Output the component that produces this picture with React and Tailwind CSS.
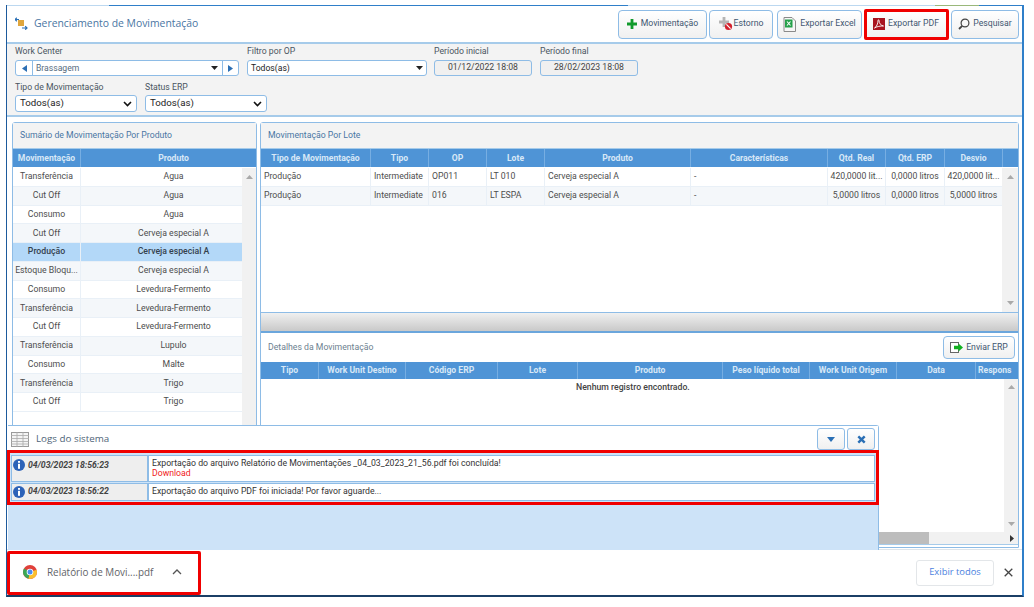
import React from "react";

const Tri = ({ className = "" }) => (
  <svg width="7" height="4" viewBox="0 0 7 4" className={className}><path d="M0 0h7L3.5 4z" fill="#222" /></svg>
);

const Chev = () => (
  <svg width="9" height="6" viewBox="0 0 9 6" fill="none"><path d="M1 1l3.5 3.5L8 1" stroke="#111" strokeWidth="1.6" /></svg>
);

const Btn = ({ w, icon, label, gap = "gap-1" }) => (
  <div className={`h-[29px] ${w} ${gap} flex items-center justify-center rounded-[4px] border border-[#8ebce6] bg-linear-to-b from-white to-[#f0f0f0] text-[8.7px] text-[#3f5670]`}>
    {icon}
    <span>{label}</span>
  </div>
);

const PlusIcon = () => (
  <svg width="10" height="10" viewBox="0 0 10 10"><path d="M3.6 0h2.8v3.6H10v2.8H6.4V10H3.6V6.4H0V3.6h3.6z" fill="#119a2c" /></svg>
);
const EstornoIcon = () => (
  <svg width="14" height="14" viewBox="0 0 14 14">
    <path d="M3.6 0h2.8v3.6H10v2.8H6.4V10H3.6V6.4H0V3.6h3.6z" fill="#b5b5b5" />
    <circle cx="9.5" cy="9.5" r="3.6" fill="#d3202c" />
    <path d="M7.4 7.4l4.2 4.2" stroke="#fff" strokeWidth="1.2" />
  </svg>
);
const ExcelIcon = () => (
  <svg width="13" height="15" viewBox="0 0 13 15">
    <path d="M1 .5h8l3.5 3.5v10.5H1z" fill="#f6f6f6" stroke="#8a8a8a" />
    <rect x="2" y="2.5" width="7.5" height="8" fill="#25a04a" />
    <path d="M4 4.5l3.5 4M7.5 4.5L4 8.5" stroke="#fff" strokeWidth="1.1" />
  </svg>
);
const PdfIcon = () => (
  <svg width="12" height="12" viewBox="0 0 12 12">
    <rect width="12" height="12" fill="#a81420" />
    <path d="M1.5 10c2-1 3.5-4.5 3.5-7.5 0-1 1-1 1 0 0 3 2 5 4.5 5.5-3-.2-6.5.5-9 2z" fill="none" stroke="#fff" strokeWidth=".9" />
  </svg>
);
const SearchIcon = () => (
  <svg width="12" height="12" viewBox="0 0 12 12" fill="none">
    <circle cx="7" cy="5" r="3.9" stroke="#444" strokeWidth="1.2" />
    <path d="M4.2 7.8L1 11" stroke="#444" strokeWidth="1.8" />
  </svg>
);
const LogoIcon = () => (
  <svg width="13" height="13" viewBox="0 0 13 13">
    <rect x="3" y="3" width="6" height="6" fill="#e0a63c" />
    <path d="M0 2.5h4M1.8 .8L0 2.5l1.8 1.7" stroke="#2a6fb5" strokeWidth="1.2" fill="none" />
    <path d="M7 11h5M10.2 9.2L12 11l-1.8 1.7" stroke="#2a6fb5" strokeWidth="1.2" fill="none" />
  </svg>
);
const ErpIcon = () => (
  <svg width="13" height="11" viewBox="0 0 13 11">
    <rect x=".5" y=".5" width="8" height="10" fill="#fff" stroke="#666" />
    <path d="M4 3.8h4.5V1.5L13 5.5 8.5 9.500V7.2H4z" fill="#11b01f" />
  </svg>
);
const InfoIcon = () => (
  <svg width="12" height="12" viewBox="0 0 12 12" className="shrink-0">
    <circle cx="6" cy="6" r="6" fill="#2c62b8" />
    <rect x="5" y="2" width="2" height="1.8" fill="#fff" />
    <rect x="5" y="4.8" width="2" height="5" fill="#fff" />
  </svg>
);
const GridIcon = () => (
  <svg width="18" height="15" viewBox="0 0 18 15">
    <rect x=".5" y=".5" width="17" height="14" fill="#f4f4f4" stroke="#9a9a9a" />
    <path d="M0 3.5h18M0 6.5h18M0 9.5h18M0 12h18M6 0v15M12 0v15" stroke="#a9a9a9" strokeWidth=".8" />
  </svg>
);
const ChromeIcon = () => (
  <svg width="14" height="14" viewBox="0 0 14 14">
    <circle cx="7" cy="7" r="7" fill="#e0403a" />
    <path d="M7 7L1 3.5A7 7 0 0 0 5.5 13.8z" fill="#3aa757" />
    <path d="M7 7l6.6-2.2A7 7 0 0 1 5.5 13.8z" fill="#fbc02d" />
    <circle cx="7" cy="7" r="3.3" fill="#fff" />
    <circle cx="7" cy="7" r="2.5" fill="#4a8df0" />
  </svg>
);

const Label = ({ children }) => <div className="text-[8.7px] leading-[12px] text-[#4a5561]">{children}</div>;

const DateBox = ({ w, children }) => (
  <div className={`${w} h-[16px] flex items-center justify-center rounded-[3px] border border-[#8ebce6] bg-[#f0f0f0] text-[8.7px] text-[#444]`}>{children}</div>
);

const HeadCell = ({ w, children, clip }) => (
  <div className={`${w} h-full shrink-0 flex items-center ${clip ? "justify-start pl-[2px]" : "justify-center"} overflow-hidden whitespace-nowrap border-r border-[#77aee2] text-[8.6px] font-bold text-[#d8e8f7]`}>{children}</div>
);

const summary = [
  ["Transferência", "Agua"],
  ["Cut Off", "Agua"],
  ["Consumo", "Agua"],
  ["Cut Off", "Cerveja especial A"],
  ["Produção", "Cerveja especial A"],
  ["Estoque Bloqu...", "Cerveja especial A"],
  ["Consumo", "Levedura-Fermento"],
  ["Transferência", "Levedura-Fermento"],
  ["Cut Off", "Levedura-Fermento"],
  ["Transferência", "Lupulo"],
  ["Consumo", "Malte"],
  ["Transferência", "Trigo"],
  ["Cut Off", "Trigo"],
];

const lots = [
  ["Produção", "Intermediate", "OP011", "LT 010", "Cerveja especial A", "-", "420,0000 lit...", "0,0000 litros", "420,0000 lit..."],
  ["Produção", "Intermediate", "016", "LT ESPA", "Cerveja especial A", "-", "5,0000 litros", "0,0000 litros", "5,0000 litros"],
];

const lotCols = ["w-[110px]", "w-[58px]", "w-[58px]", "w-[58px]", "w-[146px]", "w-[137px]", "w-[58px]", "w-[59px]", "w-[58px]"];

const ScrollArrow = ({ down }) => (
  <svg width="7" height="4" viewBox="0 0 7 4"><path d={down ? "M0 0h7L3.5 4z" : "M0 4h7L3.5 0z"} fill="#a9a9a9" /></svg>
);

export default function App() {
  return (
    <div className="relative w-[1034px] h-[607px] overflow-hidden bg-white" style={{ fontFamily: '"Roboto", "Liberation Sans", sans-serif' }}>
      <div className="ml-[6px] mt-[5px] w-[1018px] h-[592px] flex flex-col border-l border-r-2 border-b-2 border-l-[#1d5a9c] border-r-[#2f7fc9] border-b-[#1b3f66]">
        <div className="h-[1px] flex shrink-0 bg-[#2f7fc9]">
          <div className="w-[102px] bg-[#bcd8f0]" />
          <div className="w-[519px]" />
          <div className="w-[307px] bg-[#bcd8f0]" />
          <div className="w-[44px] bg-[#9ab87a]" />
        </div>
        {/* title bar */}
        <div className="h-[38px] shrink-0 flex items-center justify-between bg-white pl-[8px] pr-[3px] border-b-2 border-[#a6cbea]">
          <div className="flex items-center gap-[6px]">
            <LogoIcon />
            <span className="text-[10.4px] text-[#4a76a3]" style={{ fontFamily: '"Open Sans", sans-serif' }}>Gerenciamento de Movimentação</span>
          </div>
          <div className="flex items-center">
            <Btn w="w-[89px]" icon={<PlusIcon />} label="Movimentação" gap="gap-[4px]" />
            <div className="ml-[2px]"><Btn w="w-[64px]" icon={<EstornoIcon />} label="Estorno" gap="gap-[1px]" /></div>
            <div className="ml-[4px]"><Btn w="w-[85px]" icon={<ExcelIcon />} label="Exportar Excel" gap="gap-[4px]" /></div>
            <div className="ml-[2px]"><Btn w="w-[84px]" icon={<PdfIcon />} label="Exportar PDF" gap="gap-[3px]" /></div>
            <div className="ml-[3px]"><Btn w="w-[68px]" icon={<SearchIcon />} label="Pesquisar" gap="gap-[3px]" /></div>
          </div>
        </div>
        {/* filters */}
        <div className="h-[73px] shrink-0 bg-[#f3f3f3] border-b-2 border-[#a6cbea] pl-[8px]">
          <div className="flex">
            <div className="w-[232px]">
              <div className="h-[13px] flex items-center"><Label>Work Center</Label></div>
              <div className="mt-[3px] w-[224px] h-[16px] flex items-center rounded-[3px] border border-[#8ebce6] bg-white">
                <div className="w-[17px] h-full flex items-center justify-center border-r border-[#8ebce6]">
                  <svg width="5" height="7" viewBox="0 0 5 7"><path d="M5 0v7L0 3.5z" fill="#2c6fb4" /></svg>
                </div>
                <span className="ml-[3px] flex-1 text-[8.6px] text-[#566b80]">Brassagem</span>
                <Tri className="mr-[4px]" />
                <div className="w-[16px] h-full flex items-center justify-center border-l border-[#8ebce6]">
                  <svg width="5" height="7" viewBox="0 0 5 7"><path d="M0 0v7L5 3.5z" fill="#2c6fb4" /></svg>
                </div>
              </div>
            </div>
            <div className="w-[187px]">
              <div className="h-[13px] flex items-center"><Label>Filtro por OP</Label></div>
              <div className="mt-[3px] w-[180px] h-[16px] flex items-center justify-between px-[3px] rounded-[3px] border border-[#8ebce6] bg-white text-[8.6px] text-[#222]">
                <span>Todos(as)</span>
                <Tri />
              </div>
            </div>
            <div className="w-[106px]">
              <div className="h-[13px] flex items-center"><Label>Período inicial</Label></div>
              <div className="mt-[3px]"><DateBox w="w-[98px]">01/12/2022 18:08</DateBox></div>
            </div>
            <div>
              <div className="h-[13px] flex items-center"><Label>Período final</Label></div>
              <div className="mt-[3px]"><DateBox w="w-[98px]">28/02/2023 18:08</DateBox></div>
            </div>
          </div>
          <div className="flex mt-[4px]">
            {[["Tipo de Movimentação", "w-[130px]"], ["Status ERP", "w-[123px]"]].map(([l, w]) => (
              <div key={l} className={w}>
                <div className="h-[13px] flex items-center"><Label>{l}</Label></div>
                <div className="mt-[2px] w-[122px] h-[17px] flex items-center justify-between px-[4px] rounded-[3px] border border-[#8ebce6] bg-white text-[9.7px] text-[#222]">
                  <span>Todos(as)</span>
                  <Chev />
                </div>
              </div>
            ))}
          </div>
        </div>
        {/* panels */}
        <div className="flex-1 min-h-0 flex pl-[5px] pt-[5px] gap-[3px] text-[8.7px] text-[#4d4d4d]">
          <div className="w-[245px] h-[426px] shrink-0 rounded-t-[3px] border border-[#8ebce6] flex flex-col">
            <div className="h-[26px] shrink-0 flex items-center pl-[7px] bg-[#f3f3f3] text-[#4a76a3] border-b border-[#a6cbea]">Sumário de Movimentação Por Produto</div>
            <div className="h-[18px] shrink-0 flex bg-[#4f94d6]">
              <HeadCell w="w-[68px]">Movimentação</HeadCell>
              <div className="flex-1 pl-[10px] flex items-center justify-center text-[8.6px] font-bold text-[#d8e8f7]">Produto</div>
            </div>
            <div className="flex-1 flex min-h-0 pt-[1px]">
              <div className="w-[229px]">
                {summary.map(([a, b], i) => (
                  <div key={i} className={`h-[18.75px] flex items-center whitespace-nowrap border-b border-[#e9f0f7] ${i === 4 ? "bg-[#b3d8f8] text-[#33414e] font-medium" : i % 2 ? "bg-[#f4f7fa]" : "bg-white"}`}>
                    <div className="w-[68px] text-center border-r border-[#e9f0f7] h-full flex items-center justify-center">{a}</div>
                    <div className="flex-1 pl-[24px] text-center">{b}</div>
                  </div>
                ))}
              </div>
              <div className="flex-1 bg-[#f1f1f1] flex justify-center pt-[7px]"><ScrollArrow /></div>
            </div>
          </div>

          <div className="w-[759px] h-[426px] shrink-0 rounded-t-[3px] border border-[#8ebce6] flex flex-col">
            <div className="h-[26px] shrink-0 flex items-center pl-[7px] bg-[#f3f3f3] text-[#4a76a3] border-b border-[#a6cbea]">Movimentação Por Lote</div>
            <div className="h-[18px] shrink-0 flex bg-[#4f94d6]">
              {["Tipo de Movimentação", "Tipo", "OP", "Lote", "Produto", "Características", "Qtd. Real", "Qtd. ERP", "Desvio"].map((h, i) => (
                <HeadCell key={h} w={lotCols[i]}>{h}</HeadCell>
              ))}
            </div>
            <div className="h-[145px] shrink-0 flex pt-[1px]">
              <div className="w-[741px] shrink-0">
                {lots.map((r, i) => (
                  <div key={i} className={`h-[18.75px] flex items-center whitespace-nowrap border-b border-[#e9f0f7] ${i % 2 ? "bg-[#f4f7fa]" : "bg-white"}`}>
                    {r.map((c, j) => (
                      <div key={j} className={`${lotCols[j]} shrink-0 h-full flex items-center overflow-hidden border-r border-[#e9f0f7] ${j >= 6 ? "justify-center" : "pl-[3px]"}`}>{c}</div>
                    ))}
                  </div>
                ))}
              </div>
              <div className="flex-1 bg-[#f1f1f1] flex flex-col items-center justify-between py-[7px]"><ScrollArrow /><ScrollArrow down /></div>
            </div>
            <div className="h-[21px] shrink-0 bg-linear-to-b from-[#f0f0f0] to-[#c9c9c9] border-t border-[#8ebce6] border-b-2 border-b-[#6ba6dc]" />
            <div className="h-[29px] shrink-0 flex items-center justify-between pl-[7px] pr-[3px] bg-white">
              <span className="text-[#6d7f90]">Detalhes da Movimentação</span>
              <div className="w-[72px] h-[23px] flex items-center justify-center gap-[3px] rounded-[4px] border border-[#8ebce6] bg-linear-to-b from-white to-[#f0f0f0] text-[#3f5670]"><ErpIcon /><span>Enviar ERP</span></div>
            </div>
            <div className="h-[17px] shrink-0 flex bg-[#4f94d6] overflow-hidden">
              <HeadCell w="w-[58px]">Tipo</HeadCell>
              <HeadCell w="w-[87px]">Work Unit Destino</HeadCell>
              <HeadCell w="w-[92px]">Código ERP</HeadCell>
              <HeadCell w="w-[80px]">Lote</HeadCell>
              <HeadCell w="w-[145px]">Produto</HeadCell>
              <HeadCell w="w-[87px]">Peso líquido total</HeadCell>
              <HeadCell w="w-[87px]">Work Unit Origem</HeadCell>
              <HeadCell w="w-[79px]">Data</HeadCell>
              <HeadCell w="w-[43px]" clip>Respons</HeadCell>
            </div>
            <div className="relative flex-1 min-h-0 flex flex-col">
              <div className="flex-1 flex min-h-0">
                <div className="flex-1 pt-[2px] pl-[315px] font-medium text-[#444]">Nenhum registro encontrado.</div>
                <div className="w-[14px] bg-[#f1f1f1] flex flex-col items-center justify-between py-[6px]"><ScrollArrow /><ScrollArrow down /></div>
              </div>
              <div className="h-[12px] shrink-0 flex items-center bg-[#f1f1f1]">
                <div className="w-[668px] h-full bg-[#bdbdbd]" />
                <div className="flex-1 flex justify-end pr-[4px]">
                  <svg width="4" height="7" viewBox="0 0 4 7"><path d="M0 0v7L4 3.5z" fill="#333" /></svg>
                </div>
              </div>
              <div className="h-[3px] shrink-0 bg-white border-t border-[#a6cbea]" />
            </div>
          </div>
        </div>
        {/* download bar */}
        <div className="h-[46px] shrink-0 relative z-10 flex items-center justify-between bg-white border-t border-[#dfe5ea] pl-[16px] pr-[9px]" style={{ fontFamily: '"Open Sans", sans-serif' }}>
          <div className="flex items-center">
            <ChromeIcon />
            <span className="ml-[10px] text-[9.9px] text-[#5f6368]">Relatório de Movi....pdf</span>
            <svg width="10" height="6" viewBox="0 0 10 6" fill="none" className="ml-[19px]"><path d="M1 5l4-4 4 4" stroke="#555" strokeWidth="1.3" /></svg>
          </div>
          <div className="flex items-center">
            <div className="w-[78px] h-[26px] flex items-center justify-center rounded-[3px] border border-[#e3e6e9] text-[9.4px] text-[#4a7fe0]">Exibir todos</div>
            <svg width="9" height="9" viewBox="0 0 9 9" fill="none" className="ml-[10px]"><path d="M.7.7l7.6 7.6M8.3.7L.7 8.3" stroke="#444" strokeWidth="1.3" /></svg>
          </div>
        </div>
      </div>

      {/* floating log window */}
      <div className="absolute left-[8px] top-[425px] w-[871px] h-[125px] z-20 flex flex-col rounded-tr-[3px] border-t border-r border-[#8ebce6] bg-[#cde3f8]">
        <div className="h-[26px] shrink-0 flex items-center justify-between bg-white pl-[3px] pr-[3px]">
          <div className="flex items-center gap-[7px]">
            <GridIcon />
            <span className="text-[9.8px] text-[#4f6478]" style={{ fontFamily: '"Open Sans", sans-serif' }}>Logs do sistema</span>
          </div>
          <div className="flex gap-[2px]">
            <div className="w-[28px] h-[22px] flex items-center justify-center rounded-[3px] border border-[#8ebce6] bg-linear-to-b from-white to-[#f0f0f0]">
              <svg width="8" height="5" viewBox="0 0 8 5"><path d="M0 0h8L4 5z" fill="#2a6fb5" /></svg>
            </div>
            <div className="w-[28px] h-[22px] flex items-center justify-center rounded-[3px] border border-[#8ebce6] bg-linear-to-b from-white to-[#f0f0f0]">
              <svg width="9" height="9" viewBox="0 0 9 9" fill="none"><path d="M1.3 1.3l6.4 6.4M7.7 1.3L1.3 7.7" stroke="#2a6fb5" strokeWidth="2.4" /></svg>
            </div>
          </div>
        </div>
        <div className="mt-[3px] mx-[3px] text-[8.7px] text-[#333]">
          <div className="h-[27px] flex border border-[#8ebce6] bg-white">
            <div className="w-[137px] shrink-0 flex items-start pt-[3px] gap-[3px] pl-[1px] bg-[#eeeeee] border-r-2 border-[#8ebce6]">
              <InfoIcon />
              <span className="font-bold italic text-[#444]">04/03/2023 18:56:23</span>
            </div>
            <div className="pl-[3px] pt-[2px] leading-[10px]">
              <div>Exportação do arquivo Relatório de Movimentações _04_03_2023_21_56.pdf foi concluída!</div>
              <div className="text-[#f02020]">Download</div>
            </div>
          </div>
          <div className="mt-[1px] h-[18px] flex border border-[#8ebce6] bg-white">
            <div className="w-[137px] shrink-0 flex items-center gap-[3px] pl-[1px] bg-[#eeeeee] border-r-2 border-[#8ebce6]">
              <InfoIcon />
              <span className="font-bold italic text-[#444]">04/03/2023 18:56:22</span>
            </div>
            <div className="pl-[3px] flex items-center">Exportação do arquivo PDF foi iniciada! Por favor aguarde...</div>
          </div>
        </div>
      </div>

      {/* red annotation frames */}
      <div className="absolute left-[864px] top-[9px] w-[85px] h-[31px] z-30 rounded-[2px] border-[3px] border-[#f00000]" />
      <div className="absolute left-[7px] top-[450px] w-[872px] h-[55px] z-30 border-[3px] border-[#f00000]" />
      <div className="absolute left-[7px] top-[551px] w-[194px] h-[44px] z-30 rounded-[2px] border-[3px] border-[#f00000]" />
    </div>
  );
}
